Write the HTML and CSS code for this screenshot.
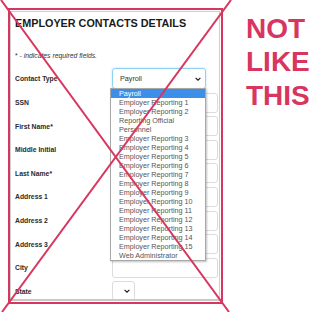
FILE: index.html
```html
<!DOCTYPE html>
<html>
<head>
<meta charset="utf-8">
<link rel="stylesheet" href="styles.css">
</head>
<body>
<div class="page">
  <div class="card">
    <h1 class="title">EMPLOYER CONTACTS DETAILS</h1>
    <p class="note"><span class="star">*</span> - indicates required fields.</p>
    <div class="form">
      <div class="label">Contact Type</div>
      <div class="select focus"><span>Payroll</span><svg class="chev" viewBox="0 0 10 6" width="6" height="4"><path d="M1 1 L5 5 L9 1" fill="none" stroke="#222" stroke-width="2"/></svg></div>
      <div class="label">SSN</div>
      <div class="input"></div>
      <div class="label">First Name*</div>
      <div class="input"></div>
      <div class="label">Middle Initial</div>
      <div class="input"></div>
      <div class="label">Last Name*</div>
      <div class="input"></div>
      <div class="label">Address 1</div>
      <div class="input"></div>
      <div class="label">Address 2</div>
      <div class="input"></div>
      <div class="label">Address 3</div>
      <div class="input"></div>
      <div class="label">City</div>
      <div class="input"></div>
      <div class="label">State</div>
      <div class="field-state"><div class="select small"><svg class="chev" viewBox="0 0 10 6" width="6" height="4"><path d="M1 1 L5 5 L9 1" fill="none" stroke="#222" stroke-width="2"/></svg></div></div>
    </div>
  </div>
  <div class="side">NOT<br>LIKE<br>THIS</div>

  <ul class="dropdown">
    <li class="active">Payroll</li>
    <li>Employer Reporting 1</li>
    <li>Employer Reporting 2</li>
    <li>Reporting Official Personnel</li>
    <li>Employer Reporting 3</li>
    <li>Employer Reporting 4</li>
    <li>Employer Reporting 5</li>
    <li>Employer Reporting 6</li>
    <li>Employer Reporting 7</li>
    <li>Employer Reporting 8</li>
    <li>Employer Reporting 9</li>
    <li>Employer Reporting 10</li>
    <li>Employer Reporting 11</li>
    <li>Employer Reporting 12</li>
    <li>Employer Reporting 13</li>
    <li>Employer Reporting 14</li>
    <li>Employer Reporting 15</li>
    <li>Web Administrator</li>
  </ul>

  <svg class="cross" viewBox="0 0 323 312" width="323" height="312">
    <rect x="9" y="9" width="213" height="294" fill="none" stroke="#d8365f" stroke-width="2"/>
    <line x1="1" y1="0" x2="229" y2="312" stroke="#d8365f" stroke-width="2"/>
    <line x1="231" y1="0" x2="2" y2="312" stroke="#d8365f" stroke-width="2"/>
  </svg>
</div>
</body>
</html>
```
FILE: styles.css
```css
html, body {
  margin: 0;
  padding: 0;
  background: #fff;
}
.page {
  position: relative;
  width: 323px;
  height: 312px;
  overflow: hidden;
  display: flex;
  align-items: flex-start;
  font-family: "Liberation Sans", Arial, sans-serif;
}
.card {
  margin-top: 11px;
  margin-left: 10px;
  width: 210px;
  height: 290px;
  box-sizing: border-box;
  border: 1px solid #cfcfcf;
  border-bottom: 2px solid #c8c8c8;
  padding: 0 1px 0 4px;
  overflow: hidden;
  flex: none;
}
.title {
  margin: 4.5px 0 0 0;
  font-size: 10.8px;
  line-height: 13px;
  font-weight: 900;
  color: #1a1a1a;
  white-space: nowrap;
}
.note {
  margin: 21px 0 0 0;
  font-size: 6.8px;
  line-height: 9px;
  font-style: italic;
  color: #333;
}
.star {
  font-style: normal;
}
.form {
  margin-top: 8.5px;
  display: grid;
  grid-template-columns: 97px 1fr;
  grid-template-rows: 21px repeat(9, 20px);
  row-gap: 3.6px;
}
.label {
  display: flex;
  align-items: center;
  font-size: 6.8px;
  font-weight: bold;
  color: #2a2a2a;
}
.input {
  border: 1px solid #dcdcdc;
  border-radius: 3px;
  box-sizing: border-box;
}
.select {
  box-sizing: border-box;
  border: 1px solid #dcdcdc;
  border-radius: 3px;
  display: flex;
  align-items: center;
  justify-content: space-between;
  padding: 0 4px 0 7px;
  font-size: 7.2px;
  color: #333;
}
.select.focus {
  margin-right: 12px;
  border-color: #8fd3f2;
  box-shadow: 0 0 2px rgba(102, 190, 235, 0.6);
}
.select.small {
  width: 23px;
  height: 20px;
  justify-content: flex-end;
}
.chev {
  display: block;
}
.side {
  margin-top: 11.6px;
  margin-left: 26px;
  font-size: 28px;
  line-height: 33.5px;
  font-weight: 900;
  color: #d8365f;
}
.dropdown {
  position: absolute;
  left: 110px;
  top: 88px;
  width: 96px;
  box-sizing: border-box;
  margin: 0;
  padding: 0;
  list-style: none;
  background: #fff;
  border: 1px solid #a8a8a8;
  box-shadow: 1px 1px 2px rgba(0, 0, 0, 0.25);
  font-size: 7.2px;
  line-height: 9px;
  color: #555;
}
.dropdown li {
  padding: 0 2px 0 8px;
}
.dropdown li.active {
  background: #3c8fe9;
  color: #fff;
}
.cross {
  position: absolute;
  left: 0;
  top: 0;
  pointer-events: none;
}
```
